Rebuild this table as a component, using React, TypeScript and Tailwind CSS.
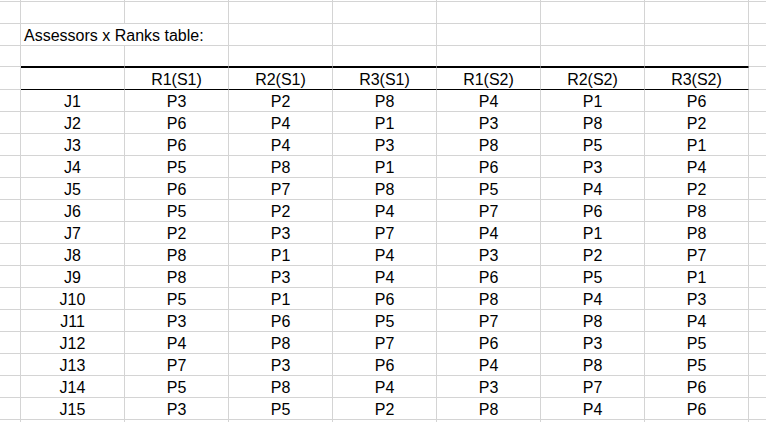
import React from "react";

const data: string[][] = [
  ["J1", "P3", "P2", "P8", "P4", "P1", "P6"],
  ["J2", "P6", "P4", "P1", "P3", "P8", "P2"],
  ["J3", "P6", "P4", "P3", "P8", "P5", "P1"],
  ["J4", "P5", "P8", "P1", "P6", "P3", "P4"],
  ["J5", "P6", "P7", "P8", "P5", "P4", "P2"],
  ["J6", "P5", "P2", "P4", "P7", "P6", "P8"],
  ["J7", "P2", "P3", "P7", "P4", "P1", "P8"],
  ["J8", "P8", "P1", "P4", "P3", "P2", "P7"],
  ["J9", "P8", "P3", "P4", "P6", "P5", "P1"],
  ["J10", "P5", "P1", "P6", "P8", "P4", "P3"],
  ["J11", "P3", "P6", "P5", "P7", "P8", "P4"],
  ["J12", "P4", "P8", "P7", "P6", "P3", "P5"],
  ["J13", "P7", "P3", "P6", "P4", "P8", "P5"],
  ["J14", "P5", "P8", "P4", "P3", "P7", "P6"],
  ["J15", "P3", "P5", "P2", "P8", "P4", "P6"],
];

const headers = ["", "R1(S1)", "R2(S1)", "R3(S1)", "R1(S2)", "R2(S2)", "R3(S2)"];

const cols = [0, 1, 2, 3, 4, 5, 6];

function Cell({
  children,
  className = "",
}: {
  children?: React.ReactNode;
  className?: string;
}) {
  return (
    <div
      className={`w-[104px] shrink-0 border-r border-b border-[#d4d4d4] flex items-end justify-center leading-[18px] ${className}`}
    >
      {children}
    </div>
  );
}

function EmptyRow({ h, blackBottom = false }: { h: string; blackBottom?: boolean }) {
  return (
    <div className={`flex ${h}`}>
      <div className="w-[21px] shrink-0 border-r border-b border-[#d4d4d4]" />
      {cols.map((c) => (
        <Cell key={c} className={blackBottom ? "border-b-black" : ""} />
      ))}
      <div className="flex-1 border-b border-[#d4d4d4]" />
    </div>
  );
}

export default function App() {
  return (
    <div
      className="w-[766px] h-[422px] overflow-hidden bg-white text-black text-[16px] flex flex-col"
      style={{ fontFamily: '"Liberation Sans", Arial, sans-serif' }}
    >
      <EmptyRow h="h-[2px]" />
      <EmptyRow h="h-[22px]" />
      {/* title row */}
      <div className="flex h-[22px]">
        <div className="w-[21px] shrink-0 border-r border-b border-[#d4d4d4]" />
        <div className="w-[104px] shrink-0 border-b border-[#d4d4d4] flex items-end leading-[18px] pl-[3px] whitespace-nowrap overflow-visible relative z-10">
          Assessors x Ranks table:
        </div>
        <div className="w-[104px] shrink-0 border-r border-b border-[#d4d4d4]" />
        {[2, 3, 4, 5, 6].map((c) => (
          <Cell key={c} />
        ))}
        <div className="flex-1 border-b border-[#d4d4d4]" />
      </div>
      <EmptyRow h="h-[22px]" blackBottom />
      {/* header row */}
      <div className="flex h-[23px]">
        <div className="w-[21px] shrink-0 border-r border-b border-[#d4d4d4]" />
        {headers.map((t, i) => (
          <Cell key={i} className="border-t border-t-black border-b-black">
            {t}
          </Cell>
        ))}
        <div className="flex-1 border-b border-[#d4d4d4]" />
      </div>
      {data.map((row, ri) => (
        <div key={ri} className="flex h-[22px] shrink-0">
          <div className="w-[21px] shrink-0 border-r border-b border-[#d4d4d4]" />
          {row.map((v, ci) => (
            <Cell key={ci}>{v}</Cell>
          ))}
          <div className="flex-1 border-b border-[#d4d4d4]" />
        </div>
      ))}
      <div className="flex h-[2px] shrink-0">
        <div className="w-[21px] shrink-0 border-r border-[#d4d4d4]" />
        {cols.map((c) => (
          <div key={c} className="w-[104px] shrink-0 border-r border-[#d4d4d4]" />
        ))}
      </div>
    </div>
  );
}
